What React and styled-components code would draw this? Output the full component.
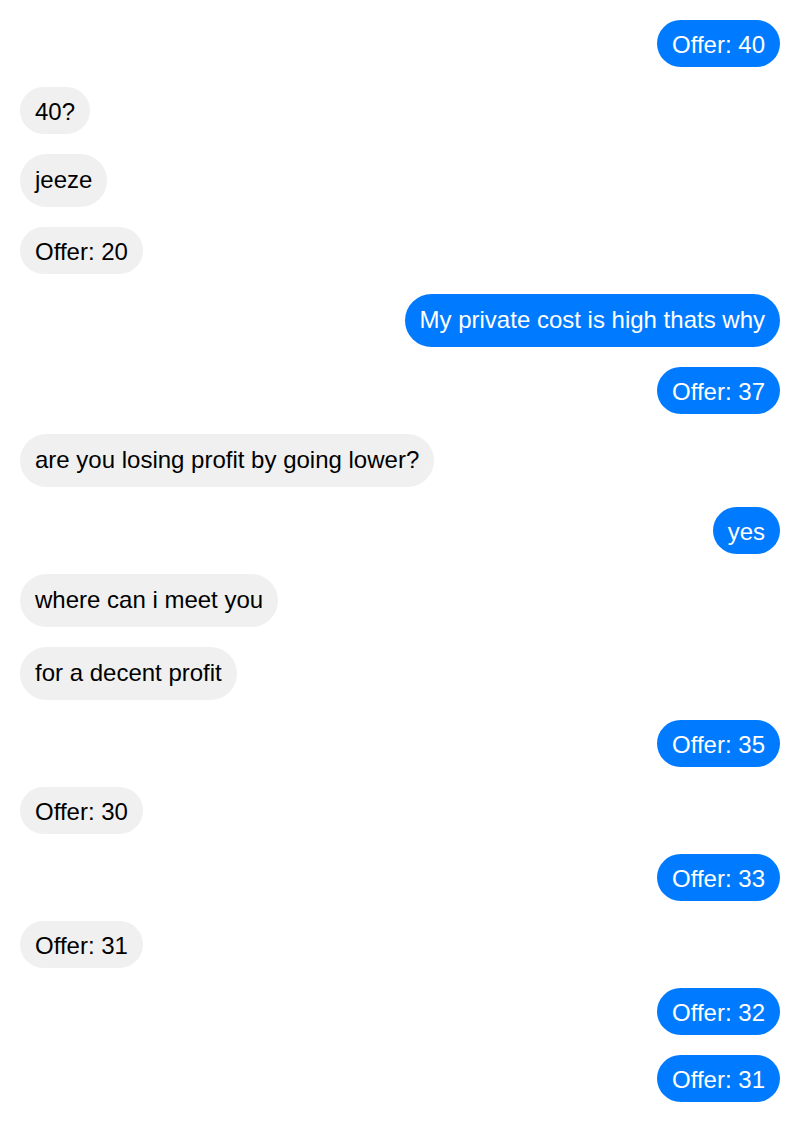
import React from "react";
import styled, { createGlobalStyle } from "styled-components";

const GlobalStyle = createGlobalStyle`
  body {
    margin: 0;
    background: #ffffff;
    font-family: "Liberation Sans", Arial, sans-serif;
  }
`;

const Thread = styled.div`
  display: flex;
  flex-direction: column;
  gap: 20px;
  padding: 20px;
`;

const Row = styled.div`
  display: flex;
  justify-content: ${(p) => (p.mine ? "flex-end" : "flex-start")};
`;

// the longer text messages sit in slightly taller bubbles than the offers
const Bubble = styled.div`
  font-size: 24px;
  line-height: 27px;
  padding: ${(p) => (p.tall ? "12px 15px 14px" : "11px 15px 9px")};
  border-radius: 27px;
  background: ${(p) => (p.mine ? "#007bff" : "#f0f0f0")};
  color: ${(p) => (p.mine ? "#ffffff" : "#000000")};
  white-space: nowrap;
`;

const MESSAGES = [
  { text: "Offer: 40", mine: true },
  { text: "40?" },
  { text: "jeeze", tall: true },
  { text: "Offer: 20" },
  { text: "My private cost is high thats why", mine: true, tall: true },
  { text: "Offer: 37", mine: true },
  { text: "are you losing profit by going lower?", tall: true },
  { text: "yes", mine: true },
  { text: "where can i meet you", tall: true },
  { text: "for a decent profit", tall: true },
  { text: "Offer: 35", mine: true },
  { text: "Offer: 30" },
  { text: "Offer: 33", mine: true },
  { text: "Offer: 31" },
  { text: "Offer: 32", mine: true },
  { text: "Offer: 31", mine: true }
];

export default function App() {
  return (
    <>
      <GlobalStyle />
      <Thread>
        {MESSAGES.map((m, i) => (
          <Row mine={m.mine} key={i}>
            <Bubble mine={m.mine} tall={m.tall}>
              {m.text}
            </Bubble>
          </Row>
        ))}
      </Thread>
    </>
  );
}
